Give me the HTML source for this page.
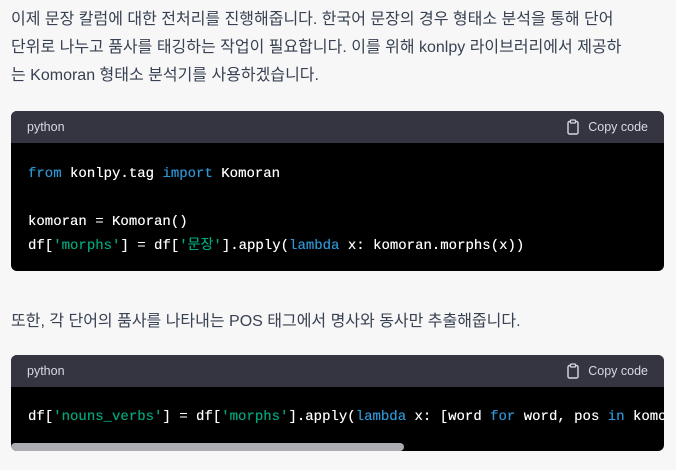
<!DOCTYPE html>
<html><head><meta charset="utf-8"><style>
*{margin:0;padding:0;box-sizing:border-box}
body{width:676px;height:470px;background:#f7f7f8;overflow:hidden;font-family:"Liberation Sans","Noto Sans CJK KR",sans-serif;color:#374151;position:relative}
.p{position:absolute;left:11px;font-size:16px;line-height:28px;white-space:nowrap;letter-spacing:0}
.blk{position:absolute;left:11px;width:653px;background:#000;border-radius:6px;overflow:hidden}
.hd{height:32px;background:#343541;color:#d9d9e3;font-size:12.5px;display:flex;align-items:center;justify-content:space-between;padding:0 16px}
.cp{display:flex;align-items:center;gap:8px}
.code{font-family:"Liberation Mono","Noto Sans CJK KR",monospace;font-size:14px;line-height:24px;color:#fff;white-space:pre;padding:0 17px;text-shadow:0 0 0.4px currentColor}
.k{color:#2e95d3}.s{color:#00a67d}
</style></head><body>
<div class="p" style="top:6px">이제 문장 칼럼에 대한 전처리를 진행해줍니다. 한국어 문장의 경우 형태소 분석을 통해 단어<br>단위로 나누고 품사를 태깅하는 작업이 필요합니다. 이를 위해 konlpy 라이브러리에서 제공하<br>는 Komoran 형태소 분석기를 사용하겠습니다.</div>
<div class="blk" style="top:111px;height:160px">
<div class="hd"><span>python</span><span class="cp"><svg width="14" height="16" viewBox="0 0 14 16"><rect x="2" y="2.5" width="10" height="12.5" rx="1.5" fill="none" stroke="#d9d9e3" stroke-width="1.4"/><rect x="4.5" y="1" width="5" height="3" rx="0.8" fill="#343541" stroke="#d9d9e3" stroke-width="1.2"/></svg>Copy code</span></div>
<div class="code" style="padding-top:19px"><span class="k">from</span> konlpy.tag <span class="k">import</span> Komoran

komoran = Komoran()
df[<span class="s">'morphs'</span>] = df[<span class="s">'문장'</span>].apply(<span class="k">lambda</span> x: komoran.morphs(x))</div>
</div>
<div class="p" style="top:308px">또한, 각 단어의 품사를 나타내는 POS 태그에서 명사와 동사만 추출해줍니다.</div>
<div class="blk" style="top:355px;height:96px">
<div class="hd"><span>python</span><span class="cp"><svg width="14" height="16" viewBox="0 0 14 16"><rect x="2" y="2.5" width="10" height="12.5" rx="1.5" fill="none" stroke="#d9d9e3" stroke-width="1.4"/><rect x="4.5" y="1" width="5" height="3" rx="0.8" fill="#343541" stroke="#d9d9e3" stroke-width="1.2"/></svg>Copy code</span></div>
<div class="code" style="padding-top:18px">df[<span class="s">'nouns_verbs'</span>] = df[<span class="s">'morphs'</span>].apply(<span class="k">lambda</span> x: [word <span class="k">for</span> word, pos <span class="k">in</span> komoran.pos(x)])</div>
<div style="position:absolute;left:0;top:88px;width:393px;height:8px;background:#acacb4;border-radius:4px"></div>
</div>
</body></html>
